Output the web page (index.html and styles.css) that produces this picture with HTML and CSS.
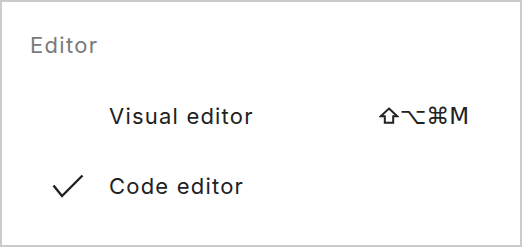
FILE: index.html
```html
<!DOCTYPE html>
<html lang="en">
<head>
  <meta charset="UTF-8" />
  <title>Editor menu</title>
  <link rel="stylesheet" href="styles.css">
</head>
<body>
  <div class="menu">
    <div class="menu-title">Editor</div>
    <div class="menu-item first">
      <span class="check"></span>
      <span class="label">Visual editor</span>
      <span class="shortcut">
        <svg class="shift" width="20" height="17" viewBox="0 0 20 17" aria-label="⇧">
          <path d="M10 1.5 L18.3 9.2 H14.2 V15.8 H5.8 V9.2 H1.7 Z" fill="none" stroke="#222" stroke-width="2" stroke-linejoin="miter" />
        </svg><span class="keys">⌥⌘M</span>
      </span>
    </div>
    <div class="menu-item">
      <span class="check">
        <svg width="32" height="24" viewBox="0 0 32 24">
          <path d="M1.5 11.5 L10 22 L30.5 1.5" fill="none" stroke="#222" stroke-width="2.4" />
        </svg>
      </span>
      <span class="label">Code editor</span>
    </div>
  </div>
</body>
</html>
```

FILE: styles.css
```css
body {
  margin: 0;
  background: #fff;
  font-family: Inter, "Noto Sans", "DejaVu Sans", sans-serif;
}

.menu {
  box-sizing: border-box;
  width: 522px;
  height: 247px;
  border: 2px solid #cbcbcb;
  background: #fff;
  padding: 28px 0 0 28px;
}

.menu-title {
  font-size: 22px;
  letter-spacing: 1.3px;
  color: #7a7a7a;
  line-height: 30px;
}

.menu-item {
  display: flex;
  align-items: center;
  height: 70px;
  font-size: 22px;
  letter-spacing: 1.2px;
  color: #222;
}

.menu-item.first {
  margin-top: 21px;
}

.check {
  width: 79px;
  display: flex;
  align-items: center;
  padding-left: 22px;
  box-sizing: border-box;
}

.label {
  flex: 1;
}

.shortcut {
  display: flex;
  align-items: center;
  margin-right: 51px;
}

.shift {
  margin-right: 1px;
  margin-top: -1px;
}

.keys {
  font-family: "DejaVu Sans", sans-serif;
  font-size: 23px;
  letter-spacing: 0;
}
```
